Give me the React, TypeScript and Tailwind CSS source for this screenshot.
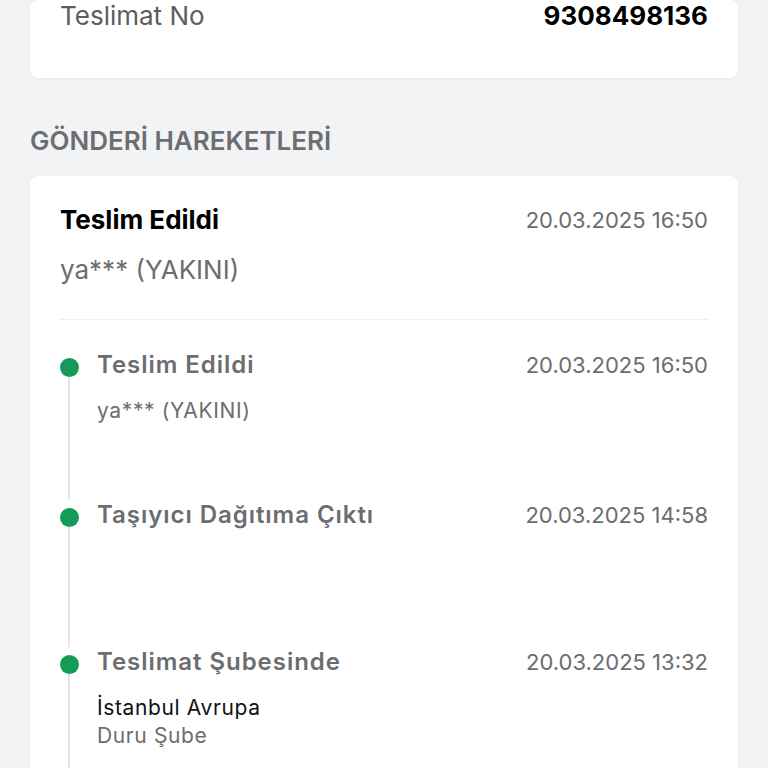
const events = [
  {
    title: "Teslim Edildi",
    date: "20.03.2025 16:50",
    lines: [{ text: "ya*** (YAKINI)", dark: false }],
    height: "h-[150px]",
  },
  {
    title: "Taşıyıcı Dağıtıma Çıktı",
    date: "20.03.2025 14:58",
    lines: [],
    height: "h-[147px]",
  },
  {
    title: "Teslimat Şubesinde",
    date: "20.03.2025 13:32",
    lines: [
      { text: "İstanbul Avrupa", dark: true },
      { text: "Duru Şube", dark: false },
    ],
    height: "h-[150px]",
  },
]

const App: React.FC = () => {
  return (
    <div className="h-[768px] overflow-hidden bg-[#f2f3f5] px-[30px] font-[Inter,sans-serif]">
      <div className="rounded-lg bg-white px-[30px] pb-[46px] shadow-[0_1px_3px_rgba(0,0,0,0.06)]">
        <div className="flex h-8 items-center justify-between">
          <p className="text-[26px] leading-8 text-[#5b5d61]">Teslimat No</p>
          <p className="text-[26px] leading-8 font-bold text-black">9308498136</p>
        </div>
      </div>

      <h2 className="mt-[49px] h-[28px] text-[26px] leading-[28px] font-semibold text-[#6c6e72]">
        GÖNDERİ HAREKETLERİ
      </h2>

      <div className="mt-[21px] rounded-lg bg-white px-[30px] pt-[28px] shadow-[0_1px_3px_rgba(0,0,0,0.06)]">
        <div className="flex h-8 items-center justify-between">
          <p className="text-[26px] leading-8 font-bold text-black">Teslim Edildi</p>
          <p className="text-[22px] leading-8 text-[#6b6d71]">20.03.2025 16:50</p>
        </div>
        <p className="mt-[18px] h-8 text-[26px] leading-8 text-[#6b6d71]">
          ya*** (YAKINI)
        </p>
        <div className="mt-[33px] h-px bg-[#eeeff1]" />

        <div className="pt-[30px]">
          {events.map((ev) => (
            <div key={ev.title} className={`relative flex ${ev.height}`}>
              <div className="relative w-[37px] shrink-0">
                <div className="absolute top-[18px] bottom-0 left-[8px] w-[2px] bg-[#e4e5e7]" />
                <div className="absolute top-[8px] left-0 h-[19px] w-[19px] rounded-full bg-[#159a57]" />
              </div>
              <div className="flex-1">
                <div className="flex h-[30px] items-center justify-between">
                  <p className="text-[24px] leading-[30px] font-semibold tracking-[0.04em] text-[#6b6d71]">
                    {ev.title}
                  </p>
                  <p className="text-[22px] leading-[30px] text-[#6b6d71]">{ev.date}</p>
                </div>
                {ev.lines.length > 0 && (
                  <div className="mt-[17px]">
                    {ev.lines.map((l) => (
                      <p
                        key={l.text}
                        className={
                          l.dark
                            ? "h-[28px] text-[21px] leading-[28px] tracking-[0.03em] text-[#111]"
                            : "h-[28px] text-[21px] leading-[28px] tracking-[0.03em] text-[#6b6d71]"
                        }
                      >
                        {l.text}
                      </p>
                    ))}
                  </div>
                )}
              </div>
            </div>
          ))}
        </div>
      </div>
    </div>
  )
}

export default App
